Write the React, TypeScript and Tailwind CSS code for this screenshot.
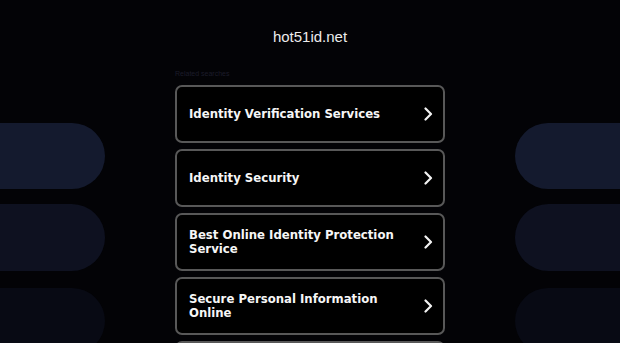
const links = [
  'Identity Verification Services',
  'Identity Security',
  'Best Online Identity Protection Service',
  'Secure Personal Information Online',
  'Identity Theft Protection',
];

const Chevron = () => (
  <svg width="10" height="14" viewBox="0 0 10 14" fill="none" className="shrink-0">
    <path d="M2.5 1.5 L8 7 L2.5 12.5" stroke="#f2f2f2" strokeWidth="2.2" strokeLinecap="round" strokeLinejoin="round" />
  </svg>
);

// side decoration pills: colour, height, top margin
const pills = [
  { c: 'bg-[#141a2e] h-[66px]', m: 'mt-0' },
  { c: 'bg-[#0e1120] h-[67px]', m: 'mt-[15px]' },
  { c: 'bg-[#080a14] h-[66px]', m: 'mt-[17px]' },
];

export default function App() {
  return (
    <div className="h-[343px] overflow-hidden bg-[#030306] flex justify-center gap-[70px]" style={{ fontFamily: '"DejaVu Sans Condensed", "DejaVu Sans", Verdana, sans-serif' }}>
      <div className="w-[605px] shrink-0 pt-[123px] flex flex-col ml-[-500px]">
        {pills.map(p => (
          <div key={p.c} className={`${p.c} ${p.m} w-full shrink-0 rounded-r-full`} />
        ))}
      </div>

      <div className="w-[270px] shrink-0 flex flex-col">
        <h1 className="pt-[27px] text-center text-[15px] leading-[20px] text-[#ececec]" style={{ fontFamily: '"Liberation Sans", Arial, sans-serif' }}>
          hot51id.net
        </h1>
        <p className="mt-[22px] text-[7px] leading-[10px] text-[#1c1c2a]" style={{ fontFamily: '"Liberation Sans", Arial, sans-serif' }}>
          Related searches
        </p>
        <ul className="mt-[6px] flex flex-col gap-[6px]">
          {links.map(t => (
            <li key={t} className="h-[58px] shrink-0 rounded-[7px] border-2 border-[#585858] bg-black flex items-center justify-between pl-[12px] pr-[10px]">
              <span className="text-[13px] leading-[14px] font-bold text-[#f6f6f6] max-w-[220px]">{t}</span>
              <Chevron />
            </li>
          ))}
        </ul>
      </div>

      <div className="w-[605px] shrink-0 pt-[123px] flex flex-col mr-[-500px]">
        {pills.map(p => (
          <div key={p.c} className={`${p.c} ${p.m} w-full shrink-0 rounded-l-full`} />
        ))}
      </div>
    </div>
  );
}
